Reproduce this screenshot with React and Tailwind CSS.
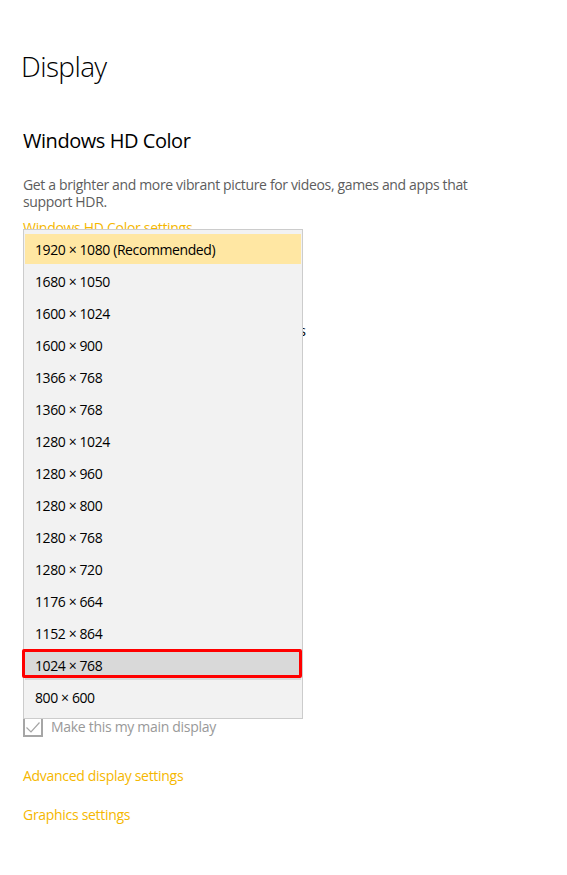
import React from "react";

const items = [
  "1920 × 1080 (Recommended)",
  "1680 × 1050",
  "1600 × 1024",
  "1600 × 900",
  "1366 × 768",
  "1360 × 768",
  "1280 × 1024",
  "1280 × 960",
  "1280 × 800",
  "1280 × 768",
  "1280 × 720",
  "1176 × 664",
  "1152 × 864",
  "1024 × 768",
  "800 × 600",
];

export default function App() {
  return (
    <div className="relative w-[567px] h-[875px] overflow-hidden bg-white font-['Open_Sans',sans-serif] text-[#000]">
      <div className="flex flex-col pl-[23px]">
        <h1 className="mt-[46px] -ml-[2px] h-[40px] text-[28px] leading-[40px] font-light tracking-[-0.6px]">Display</h1>
        <h2 className="mt-[41px] h-[28px] text-[20px] leading-[28px] font-normal tracking-[-0.45px]">Windows HD Color</h2>
        <p className="mt-[21px] w-[460px] text-[14px] leading-[17px] tracking-[-0.35px] text-[#5d5d5d]">
          Get a brighter and more vibrant picture for videos, games and apps that support HDR.
        </p>
        <div className="mt-[8px] h-[20px] text-[14px] leading-[20px] tracking-[-0.3px] text-[#f5b700]">Windows HD Color settings</div>
        <div className="mt-[83px] w-[283px] h-[20px] flex justify-end overflow-hidden whitespace-nowrap text-[14px] leading-[20px] text-[#000]">
          <span>items</span>
        </div>
        <div className="mt-[376px] flex items-center gap-[8px] h-[20px]">
          <div className="w-[20px] h-[20px] border-2 border-[#a6a6a6] flex items-center justify-center">
            <svg width="16" height="16" viewBox="0 0 16 16" fill="none">
              <path d="M1.5 8.5 L6 13 L14.5 3.5" stroke="#a6a6a6" strokeWidth="1.2" />
            </svg>
          </div>
          <span className="text-[14px] leading-[20px] tracking-[-0.3px] text-[#999]">Make this my main display</span>
        </div>
        <div className="mt-[29px] h-[20px] text-[14px] leading-[20px] tracking-[-0.3px] text-[#f5b700]">Advanced display settings</div>
        <div className="mt-[19px] h-[20px] text-[14px] leading-[20px] tracking-[-0.3px] text-[#f5b700]">Graphics settings</div>
      </div>

      <div className="absolute left-[23px] top-[229px] w-[280px] h-[490px] border border-[#cccccc] bg-[#f2f2f2] pt-[3px] px-px">
        <div className="flex flex-col">
          {items.map((t, i) => {
            const first = i === 0;
            const sel = i === 13;
            return (
              <div key={t} className="relative h-[32px] py-px">
                <div
                  className={
                    first
                      ? "h-[30px] bg-[#ffe7a3] pl-[10px] flex items-center text-[14px] tracking-[-0.4px] text-[#000]"
                      : sel
                      ? "h-[30px] bg-[#d9d9d9] pl-[10px] flex items-center text-[14px] tracking-[-0.4px] text-[#000]"
                      : "h-[30px] pl-[10px] flex items-center text-[14px] tracking-[-0.4px] text-[#000]"
                  }
                >
                  {t}
                </div>
                {sel && (
                  <div className="absolute -left-[3px] -right-[1px] top-0 h-[29px] border-[3px] border-[#ff0000] rounded-[2px]" />
                )}
              </div>
            );
          })}
        </div>
      </div>
    </div>
  );
}
